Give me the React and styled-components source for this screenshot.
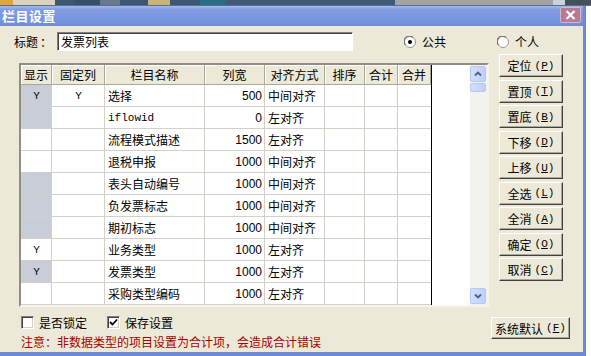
import React from "react";
import styled, { createGlobalStyle } from "styled-components";

const GlobalStyle = createGlobalStyle`
  html, body { margin: 0; padding: 0; background: #fff; }
  body {
    font-family: "Noto Sans CJK SC", "Liberation Sans", sans-serif;
    font-size: 12px;
    color: #000;
  }
`;

const stripSegs = [
  [13, "#E0A63C"], [42, "#D8D2BE"], [20, "#3C5672"], [25, "#35506B"],
  [20, "#6A7A8C"], [28, "#3C5672"], [22, "#C7B478"], [30, "#3C5672"],
  [25, "#2A6E86"], [170, "#3E5A76"], [158, "#A3A4A6"], [12, "#C9D3DD"],
  [26, "#44505C"],
];

const columns = [
  { title: "显示", w: 31 },
  { title: "固定列", w: 53 },
  { title: "栏目名称", w: 100 },
  { title: "列宽", w: 60 },
  { title: "对齐方式", w: 60 },
  { title: "排序", w: 40 },
  { title: "合计", w: 33 },
  { title: "合并", w: 33 },
];

const rows = [
  { show: "Y", fix: "Y", name: "选择", width: 500, align: "中间对齐", gray: true },
  { show: "", fix: "", name: "iflowid", width: 0, align: "左对齐", gray: true, latin: true },
  { show: "", fix: "", name: "流程模式描述", width: 1500, align: "左对齐" },
  { show: "", fix: "", name: "退税申报", width: 1000, align: "中间对齐" },
  { show: "", fix: "", name: "表头自动编号", width: 1000, align: "中间对齐", gray: true },
  { show: "", fix: "", name: "负发票标志", width: 1000, align: "中间对齐", gray: true },
  { show: "", fix: "", name: "期初标志", width: 1000, align: "中间对齐", gray: true },
  { show: "Y", fix: "", name: "业务类型", width: 1000, align: "左对齐" },
  { show: "Y", fix: "", name: "发票类型", width: 1000, align: "左对齐", gray: true },
  { show: "", fix: "", name: "采购类型编码", width: 1000, align: "左对齐" },
];

const sideButtons = [
  ["定位", "P"], ["置顶", "T"], ["置底", "B"], ["下移", "D"], ["上移", "U"],
  ["全选", "L"], ["全消", "A"], ["确定", "O"], ["取消", "C"],
];

const Screen = styled.div`
  width: 591px;
  height: 356px;
  overflow: hidden;
  display: flex;
  flex-direction: column;
`;

const Strip = styled.div`
  height: 6px;
  display: flex;
  flex-shrink: 0;
`;

const Seg = styled.div`
  width: ${(p) => p.w}px;
  background: ${(p) => p.c};
  border-bottom: 1px solid #5A6E86;
`;

const Frame = styled.div`
  flex: 1;
  display: flex;
`;

const Window = styled.div`
  width: 583px;
  border-right: 3px solid #6D88D7;
  display: flex;
  flex-direction: column;
`;

const TitleBar = styled.div`
  height: 20px;
  display: flex;
  align-items: center;
  justify-content: space-between;
  padding: 0 2px 0 2px;
  background: linear-gradient(to bottom, #A4BAF0 0, #809CE3 18%, #7794DF 70%, #6F8BD8 100%);
`;

const TitleText = styled.div`
  color: #fff;
  font-weight: 700;
  font-size: 13px;
  letter-spacing: 0.5px;
  margin-top: -1px;
`;

const CloseBtn = styled.div`
  width: 21px;
  height: 16px;
  margin-top: -3px;
  box-sizing: border-box;
  border: 1px solid #D7B6C6;
  border-radius: 2px;
  background: #B57A94;
  display: flex;
  align-items: center;
  justify-content: center;
`;

const Body = styled.div`
  flex: 1;
  background: #ECE9D8;
  display: flex;
  flex-direction: column;
`;

const BottomEdge = styled.div`
  height: 4px;
  background: #6D88D7;
`;

const HeaderRow = styled.div`
  display: flex;
  align-items: center;
  margin-top: 6px;
  height: 19px;
`;

const Label = styled.div`
  margin-left: 14px;
  width: 43px;
  font-size: 12px;
  display: flex;
  & span { margin-left: 2px; }
`;

const TextInput = styled.div`
  width: 296px;
  height: 19px;
  box-sizing: border-box;
  background: #fff;
  border-top: 1px solid #808080;
  border-left: 1px solid #808080;
  border-bottom: 1px solid #fff;
  border-right: 1px solid #fff;
  box-shadow: inset 1px 1px 0 #404040;
  padding-left: 3px;
  line-height: 17px;
  font-size: 12px;
`;

const RadioLabel = styled.label`
  display: flex;
  align-items: center;
  gap: 6px;
  margin-left: 51px;
  font-size: 12px;
`;

const Main = styled.div`
  display: flex;
  margin-top: 3px;
`;

const GridBox = styled.div`
  margin-left: 19px;
  margin-top: 9px;
  width: 470px;
  height: 244px;
  box-sizing: border-box;
  border-top: 2px solid #8F8D84;
  border-left: 2px solid #8F8D84;
  border-right: 2px solid #F4F3EE;
  border-bottom: 2px solid #F4F3EE;
  display: flex;
  overflow: hidden;
  background: #fff;
`;

const Table = styled.div`
  display: grid;
  grid-template-columns: ${columns.map((c) => c.w + "px").join(" ")};
  grid-auto-rows: 22px;
  grid-template-rows: 20px;
  border-right: 1px solid #000;
  align-content: start;
`;

const HeadCell = styled.div`
  background: #ECE9D8;
  border-right: 1px solid #ACA899;
  border-bottom: 1px solid #ACA899;
  box-shadow: inset 1px 1px 0 #fff;
  display: flex;
  align-items: center;
  justify-content: center;
  font-size: 12px;
  white-space: nowrap;
  &:last-child { border-right: none; }
`;

const Cell = styled.div`
  background: ${(p) => (p.gray ? "#C9CDD8" : "#fff")};
  border-right: 1px solid #D4D0C8;
  border-bottom: 1px solid #D4D0C8;
  display: flex;
  align-items: center;
  justify-content: ${(p) => p.justify || "flex-start"};
  padding: 0 2px 0 3px;
  font-size: 12px;
  white-space: nowrap;
  overflow: hidden;
  font-family: ${(p) =>
    p.mono
      ? '"Liberation Mono", monospace'
      : p.num
      ? '"Liberation Sans", sans-serif'
      : '"Noto Sans CJK SC", sans-serif'};
  ${(p) => (p.mono ? "font-size: 11px;" : "")}
  ${(p) => (p.last ? "border-right: none;" : "")}
`;

const Blank = styled.div`
  flex: 1;
  background: #fff;
`;

const ScrollBar = styled.div`
  width: 17px;
  background: #F3F2EC;
  border-left: 1px solid #FBFBF8;
  display: flex;
  flex-direction: column;
  padding: 1px 0 1px;
`;

const ScrollBtn = styled.div`
  height: ${(p) => p.h || 16}px;
  box-sizing: border-box;
  margin: 0 1px ${(p) => p.mb || 0}px 0;
  border: 1px solid #B4C8F6;
  border-radius: 2px;
  background: linear-gradient(to right, #D2DEFC, #BFD0F8);
  display: flex;
  align-items: center;
  justify-content: center;
`;

const Spacer = styled.div`
  flex: 1;
`;

const SideCol = styled.div`
  margin-left: 10px;
  display: flex;
  flex-direction: column;
  gap: 2.5px;
`;

const Button = styled.div`
  width: ${(p) => p.w || 64}px;
  height: ${(p) => p.h || 23}px;
  box-sizing: border-box;
  background: #ECE9D8;
  border-top: 1px solid #fff;
  border-left: 1px solid #fff;
  border-right: 1px solid #404040;
  border-bottom: 1px solid #404040;
  box-shadow: inset -1px -1px 0 #ACA899;
  display: flex;
  align-items: center;
  justify-content: center;
  font-size: 12px;
  white-space: nowrap;
`;

const Key = styled.span`
  font-family: "Liberation Mono", monospace;
  font-size: 11px;
  margin-left: 3px;
  & u { text-decoration: underline; }
`;

const Footer = styled.div`
  display: flex;
`;

const FooterLeft = styled.div`
  width: 491px;
  box-sizing: border-box;
  padding-left: 21px;
  display: flex;
  flex-direction: column;
`;

const CheckRow = styled.div`
  display: flex;
  align-items: center;
  margin-top: 9px;
  height: 13px;
`;

const CheckLabel = styled.label`
  display: flex;
  align-items: center;
  gap: 5px;
  margin-right: ${(p) => p.mr || 0}px;
  font-size: 12px;
`;

const Box = styled.div`
  width: 13px;
  height: 13px;
  box-sizing: border-box;
  background: #fff;
  border-top: 1px solid #808080;
  border-left: 1px solid #808080;
  border-right: 1px solid #fff;
  border-bottom: 1px solid #fff;
  box-shadow: inset 1px 1px 0 #404040, inset -1px -1px 0 #D4D0C8;
  display: flex;
  align-items: center;
  justify-content: center;
`;

const Warning = styled.div`
  margin-top: 6px;
  color: #A80000;
  font-size: 12px;
  line-height: 14px;
  white-space: nowrap;
`;

const FooterRight = styled.div`
  padding-top: 10px;
`;

function Radio({ checked }) {
  return (
    <svg width="12" height="12" viewBox="0 0 12 12">
      <circle cx="6" cy="6" r="5.5" fill="#fff" stroke="#9A978C" />
      <path d="M1.5 9 A5 5 0 0 1 9 1.5" fill="none" stroke="#555" strokeWidth="1" />
      {checked && <circle cx="6" cy="6" r="2" fill="#000" />}
    </svg>
  );
}

function Arrow({ up }) {
  return (
    <svg width="8" height="6" viewBox="0 0 8 6">
      <path
        d={up ? "M1 4.5 L4 1.5 L7 4.5" : "M1 1.5 L4 4.5 L7 1.5"}
        fill="none"
        stroke="#4D6185"
        strokeWidth="1.8"
      />
    </svg>
  );
}

export default function App() {
  return (
    <Screen>
      <GlobalStyle />
      <Strip>
        {stripSegs.map(([w, c], i) => (
          <Seg key={i} w={w} c={c} />
        ))}
      </Strip>
      <Frame>
        <Window>
          <TitleBar>
            <TitleText>栏目设置</TitleText>
            <CloseBtn>
              <svg width="11" height="10" viewBox="0 0 11 10">
                <path d="M1.5 1 L9.5 9 M9.5 1 L1.5 9" stroke="#fff" strokeWidth="2.2" />
              </svg>
            </CloseBtn>
          </TitleBar>
          <Body>
            <HeaderRow>
              <Label>
                标题<span>：</span>
              </Label>
              <TextInput>发票列表</TextInput>
              <RadioLabel>
                <Radio checked />
                公共
              </RadioLabel>
              <RadioLabel>
                <Radio />
                个人
              </RadioLabel>
            </HeaderRow>
            <Main>
              <GridBox>
                <Table>
                  {columns.map((c) => (
                    <HeadCell key={c.title}>{c.title}</HeadCell>
                  ))}
                  {rows.map((r, i) => (
                    <React.Fragment key={i}>
                      <Cell gray={r.gray} justify="center" mono>{r.show}</Cell>
                      <Cell justify="center" mono>{r.fix}</Cell>
                      <Cell mono={r.latin}>{r.name}</Cell>
                      <Cell justify="flex-end" num>{r.width}</Cell>
                      <Cell>{r.align}</Cell>
                      <Cell />
                      <Cell />
                      <Cell last />
                    </React.Fragment>
                  ))}
                </Table>
                <Blank />
                <ScrollBar>
                  <ScrollBtn h={16} mb={1}>
                    <Arrow up />
                  </ScrollBtn>
                  <ScrollBtn h={9} />
                  <Spacer />
                  <ScrollBtn h={16}>
                    <Arrow />
                  </ScrollBtn>
                </ScrollBar>
              </GridBox>
              <SideCol>
                {sideButtons.map(([t, k]) => (
                  <Button key={k}>
                    {t}
                    <Key>
                      (<u>{k}</u>)
                    </Key>
                  </Button>
                ))}
              </SideCol>
            </Main>
            <Footer>
              <FooterLeft>
                <CheckRow>
                  <CheckLabel mr={20}>
                    <Box />
                    是否锁定
                  </CheckLabel>
                  <CheckLabel>
                    <Box>
                      <svg width="9" height="9" viewBox="0 0 9 9">
                        <path d="M1 4 L3.5 6.5 L8 1.5" fill="none" stroke="#000" strokeWidth="1.8" />
                      </svg>
                    </Box>
                    保存设置
                  </CheckLabel>
                </CheckRow>
                <Warning>注意：非数据类型的项目设置为合计项，会造成合计错误</Warning>
              </FooterLeft>
              <FooterRight>
                <Button w={79} h={22}>
                  系统默认
                  <Key>
                    (<u>F</u>)
                  </Key>
                </Button>
              </FooterRight>
            </Footer>
          </Body>
          <BottomEdge />
        </Window>
      </Frame>
    </Screen>
  );
}
